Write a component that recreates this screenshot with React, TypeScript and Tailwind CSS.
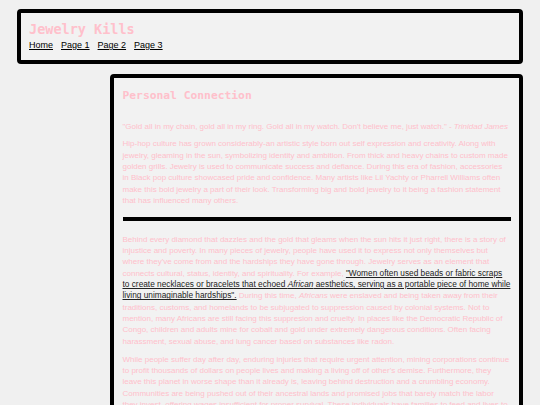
import React from "react";

const body = "font-['Liberation_Sans',Arial,sans-serif]";
const mono = "font-['DejaVu_Sans_Mono',monospace]";

export default function App() {
  return (
    <div className={`min-h-screen bg-[#f0f0f0] px-[17px] pt-[9px] pb-[20px] ${body}`}>
      <header className="rounded-[4px] border-[4px] border-black bg-[#f2f2f2] px-[8px] pt-[8px] pb-[9px]">
        <h1 className={`${mono} text-[13.5px] font-bold leading-[16px] text-[#ffc0cb]`}>
          Jewelry Kills
        </h1>
        <nav className="mt-[2px] flex gap-[8px] text-[9px] leading-[12px] text-black">
          <a href="#" className="underline">Home</a>
          <a href="#" className="underline">Page 1</a>
          <a href="#" className="underline">Page 2</a>
          <a href="#" className="underline">Page 3</a>
        </nav>
      </header>

      <div className="mt-[10px] flex">
        <aside className="w-[93px] shrink-0" />
        <main className="flex-1 rounded-[4px] border-[4px] border-black bg-[#f2f2f2] px-[8.5px] pt-[10.5px] pb-[20px]">
          <h2 className={`${mono} text-[11.3px] font-bold leading-[14px] text-[#ffc0cb]`}>
            Personal Connection
          </h2>
          <div className="flex flex-col text-[8px] leading-[11.35px] text-[#ffc0cb]">
            <p className="mt-[18.5px]">
              "Gold all in my chain, gold all in my ring. Gold all in my watch. Don't believe me, just watch." - <em>Trinidad James</em>
            </p>
            <p className="mt-[6px]">
              Hip-hop culture has grown considerably-an artistic style born out self expression and creativity. Along with jewelry, gleaming in the sun, symbolizing identity and ambition. From thick and heavy chains to custom made golden grills. Jewelry is used to communicate success and defiance. During this era of fashion, accessories in Black pop culture showcased pride and confidence. Many artists like Lil Yachty or Pharrell Williams often make this bold jewelry a part of their look. Transforming big and bold jewelry to it being a fashion statement that has influenced many others.
            </p>
            <div className="mt-[10.5px] h-[4px] bg-black" />
            <p className="mt-[12.7px]">
              Behind every diamond that dazzles and the gold that gleams when the sun hits it just right, there is a story of injustice and poverty. In many pieces of jewelry, people have used it to express not only themselves but where they've come from and the hardships they have gone through. Jewelry serves as an element that connects cultural, status, identity, and spirituality. For example,{" "}
              <a href="#" className="text-[8.3px] text-[#222222] underline">
                "Women often used beads or fabric scraps to create necklaces or bracelets that echoed <em>African</em> aesthetics, serving as a portable piece of home while living unimaginable hardships".
              </a>{" "}
              During this time, <em>Africans</em> were enslaved and being taken away from their traditions, customs, and homelands to be subjugated to suppression caused by colonial systems. Not to mention, many Africans are still facing this suppresion and cruelty. In places like the Democratic Republic of Congo, children and adults mine for cobalt and gold under extremely dangerous conditions. Often facing harassment, sexual abuse, and lung cancer based on substances like radon.
            </p>
            <p className="mt-[6.5px]">
              While people suffer day after day, enduring injuries that require urgent attention, mining corporations continue to profit thousands of dollars on people lives and making a living off of other's demise. Furthermore, they leave this planet in worse shape than it already is, leaving behind destruction and a crumbling economy. Communities are being pushed out of their ancestral lands and promised jobs that barely match the labor they invest, offering wages insufficient for proper survival. These individuals have families to feed and lives to live, yet they are left with nothing but the dust of the treasures they dig up.
            </p>
          </div>
        </main>
      </div>
    </div>
  );
}
